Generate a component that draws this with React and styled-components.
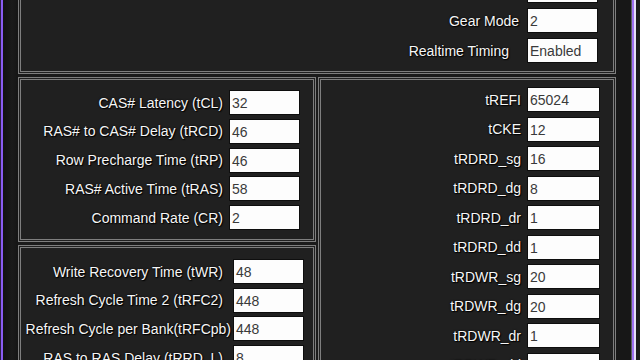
import React from "react";
import styled, { createGlobalStyle } from "styled-components";

const GlobalStyle = createGlobalStyle`
  html, body {
    margin: 0;
    padding: 0;
    background: #181818;
  }
  body {
    font-family: "Liberation Sans", Arial, sans-serif;
  }
`;

const Screen = styled.div`
  width: 640px;
  height: 360px;
  overflow: hidden;
  display: flex;
  background: #1b1b1b;
`;

const LeftEdge = styled.div`
  width: 18px;
  flex: none;
  display: flex;
  border-left: 1px solid #2a2040;
  box-sizing: border-box;
  &::before {
    content: "";
    width: 2px;
    background: #8a5cf2;
  }
  &::after {
    content: "";
    flex: 1;
    background: linear-gradient(90deg, #121212, #1a1a1a 60%, #151515);
  }
`;

const RightEdge = styled.div`
  flex: 1;
  display: flex;
  justify-content: flex-end;
  background: #171717;
  &::after {
    content: "";
    width: 8px;
    border-left: 1px solid #5b5b5b;
    background: linear-gradient(
      90deg,
      #9d6ff0 0 2px,
      #e6dcf6 2px 4px,
      #1a1a1a 4px
    );
  }
`;

const Main = styled.div`
  width: 598px;
  flex: none;
  display: flex;
  flex-direction: column;
  gap: 3px;
`;

const Panel = styled.section`
  box-sizing: border-box;
  border: 3px double #7e7e7e;
  background: #202020;
  display: flex;
  flex-direction: column;
  overflow: hidden;
`;

const TopPanel = styled(Panel)`
  height: 74px;
  border-top: none;
  justify-content: flex-end;
  align-items: flex-end;
  padding: 0 15px 8px 0;
  gap: 5px;
`;

const Columns = styled.div`
  display: flex;
  gap: 2px;
  flex: 1;
  min-height: 0;
`;

const LeftColumn = styled.div`
  width: 298px;
  display: flex;
  flex-direction: column;
  gap: 3px;
`;

const LatencyPanel = styled(Panel)`
  height: 165px;
  align-items: flex-end;
  padding: 10px 13px 0 0;
  gap: 3.75px;
`;

const RecoveryPanel = styled(Panel)`
  flex: 1;
  border-bottom: none;
  align-items: flex-end;
  padding: 11px 9px 0 0;
  gap: 3.7px;
`;

const SecondaryPanel = styled(Panel)`
  width: 298px;
  border-bottom: none;
  align-items: flex-end;
  padding: 7px 13px 0 0;
  gap: 4.5px;
`;

const Row = styled.div`
  display: flex;
  align-items: center;
  flex: none;
`;

const Label = styled.span`
  color: #f6f6f6;
  font-size: 14px;
  white-space: nowrap;
  margin-right: ${(p) => p.$gap}px;
  text-shadow: 0 0 2px #000, 1px 1px 1px #000;
`;

const Value = styled.div`
  box-sizing: border-box;
  width: ${(p) => p.$width}px;
  height: 25px;
  background: #fdfdfd;
  border: 1px solid #0e0e0e;
  color: #3a3a3a;
  font-size: 14px;
  line-height: 24px;
  padding-left: 2px;
`;

const topRows = [
  { id: "cmd", label: "", value: "", gap: 8 },
  { id: "gear", label: "Gear Mode", value: "2", gap: 8 },
  { id: "rt", label: "Realtime Timing", value: "Enabled", gap: 18 },
];

const latencyRows = [
  ["CAS# Latency (tCL)", "32"],
  ["RAS# to CAS# Delay (tRCD)", "46"],
  ["Row Precharge Time (tRP)", "46"],
  ["RAS# Active Time (tRAS)", "58"],
  ["Command Rate (CR)", "2"],
];

const recoveryRows = [
  ["Write Recovery Time (tWR)", "48", 10],
  ["Refresh Cycle Time 2 (tRFC2)", "448", 10],
  ["Refresh Cycle per Bank(tRFCpb)", "448", 2],
  ["RAS to RAS Delay (tRRD_L)", "8", 10],
];

const secondaryRows = [
  ["tREFI", "65024"],
  ["tCKE", "12"],
  ["tRDRD_sg", "16"],
  ["tRDRD_dg", "8"],
  ["tRDRD_dr", "1"],
  ["tRDRD_dd", "1"],
  ["tRDWR_sg", "20"],
  ["tRDWR_dg", "20"],
  ["tRDWR_dr", "1"],
  ["tRDWR_dd", "1"],
];

export default function App() {
  return (
    <>
      <GlobalStyle />
      <Screen>
        <LeftEdge />
        <Main>
          <TopPanel>
            {topRows.map((r) => (
              <Row key={r.id}>
                <Label $gap={r.gap}>{r.label}</Label>
                <Value $width={71}>{r.value}</Value>
              </Row>
            ))}
          </TopPanel>
          <Columns>
            <LeftColumn>
              <LatencyPanel>
                {latencyRows.map(([label, value]) => (
                  <Row key={label}>
                    <Label $gap={6}>{label}</Label>
                    <Value $width={71}>{value}</Value>
                  </Row>
                ))}
              </LatencyPanel>
              <RecoveryPanel>
                {recoveryRows.map(([label, value, gap]) => (
                  <Row key={label}>
                    <Label $gap={gap}>{label}</Label>
                    <Value $width={71}>{value}</Value>
                  </Row>
                ))}
              </RecoveryPanel>
            </LeftColumn>
            <SecondaryPanel>
              {secondaryRows.map(([label, value]) => (
                <Row key={label}>
                  <Label $gap={6}>{label}</Label>
                  <Value $width={73}>{value}</Value>
                </Row>
              ))}
            </SecondaryPanel>
          </Columns>
        </Main>
        <RightEdge />
      </Screen>
    </>
  );
}
